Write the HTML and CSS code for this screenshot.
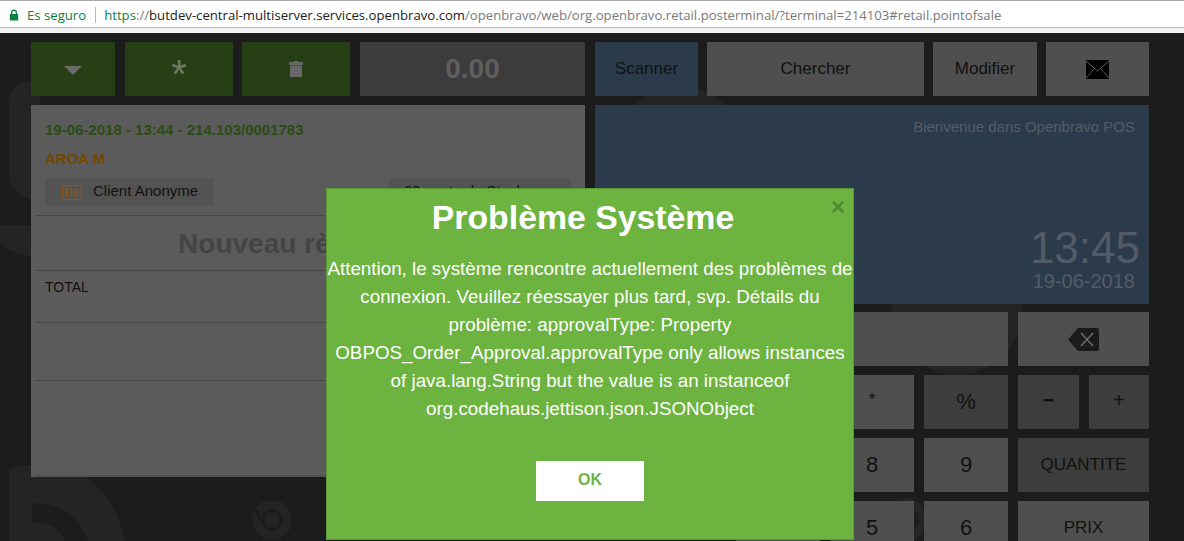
FILE: index.html
```html
<!DOCTYPE html>
<html lang="fr">
<head>
<meta charset="utf-8">
<title>Openbravo POS</title>
<link rel="stylesheet" href="styles.css">
</head>
<body>
<div class="urlbar">
  <svg class="lock" width="10" height="12" viewBox="0 0 10 12"><path d="M2 5V3.4a3 3 0 0 1 6 0V5h1.2v6.6H.8V5zM3.3 5h3.4V3.4a1.7 1.7 0 0 0-3.4 0z" fill="#0b8043"/></svg>
  <span class="secure">Es seguro</span>
  <span class="sep"></span>
  <span class="url"><span class="scheme">https</span>://<span class="host">butdev-central-multiserver.services.openbravo.com</span>/openbravo/web/org.openbravo.retail.posterminal/?terminal=214103#retail.pointofsale</span>
</div>
<div class="app">
  <svg class="bgart" width="1184" height="508" viewBox="0 0 1184 508">
    <g fill="#242424">
      <path d="M40 49H30Q9 49 9 70V140Q9 165 40 167Z"/>
      <path d="M0 192H40V225Q12 222 0 210Z"/>
      <path d="M9 436Q20 432 31 432H66Q115 455 125 508H9Z"/>
      <circle cx="272" cy="487" r="20"/>
      <circle cx="957" cy="277" r="65"/>
      <circle cx="680" cy="117" r="64"/>
    </g>
    <path d="M32 470Q75 470 88 508H65Q58 489 32 489Z" fill="#1c1c1c"/>
    <g fill="none" stroke="#1c1c1c">
      <circle cx="272" cy="487" r="9" stroke-width="3.5"/>
      <path d="M256 477L265 494" stroke-width="3.5"/>
    </g>
    <circle cx="905" cy="487" r="18" fill="none" stroke="#252525" stroke-width="8"/>
  </svg>
  <div class="columns">
    <div class="col">
      <div class="toolbar">
        <div class="btn green w84 mr1"><span class="tri"></span></div>
        <div class="btn green w108"><span class="star">*</span></div>
        <div class="btn green w108 mr1">
          <svg width="14" height="16" viewBox="0 0 14 16"><path d="M5 0h4v1H5zM0 1h14v3H0zM1 4.500h12V16H1z" fill="#686868"/></svg>
        </div>
        <div class="btn total grow">0.00</div>
      </div>
      <div class="ticket">
        <div class="ticket-head">
          <div class="docno">19-06-2018 - 13:44 - 214.103/0001783</div>
          <div class="user">AROA M</div>
          <div class="chips">
            <div class="chip client">
              <svg width="20" height="15" viewBox="0 0 20 15"><rect x=".7" y=".7" width="18.6" height="13.6" rx="1" fill="none" stroke="#8a5a1a" stroke-width="1.2"/><path d="M4 4h3M4 7.500h3M4 11h3M4 4v7M9.500 4v7M12.500 4v7M15.500 4v7" stroke="#8a5a1a" stroke-width="1.4" fill="none"/></svg>
              <span class="chip-label">Client Anonyme</span>
            </div>
            <div class="chip stock"><span class="chip-label">00 vente de Stock</span></div>
          </div>
        </div>
        <div class="row title">Nouveau règlement</div>
        <div class="row totalrow">TOTAL</div>
        <div class="row blank"></div>
        <div class="ticket-foot"></div>
      </div>
    </div>
    <div class="col">
      <div class="toolbar tight">
        <div class="btn blue w103">Scanner</div>
        <div class="btn grow">Chercher</div>
        <div class="btn w104">Modifier</div>
        <div class="btn w103">
          <svg width="23" height="19" viewBox="0 0 23 19"><rect width="23" height="19" rx="1" fill="#000"/><path d="M0 1l11.500 10L23 1M0 18l8.500-9.500M23 18l-8.500-9.500" fill="none" stroke="#5a5a5a" stroke-width="1"/></svg>
        </div>
      </div>
      <div class="welcome">
        <div class="hello">Bienvenue dans Openbravo POS</div>
        <div class="clock">13:45</div>
        <div class="date">19-06-2018</div>
      </div>
      <div class="keypad">
        <div class="btn field"></div>
        <div class="btn">
          <svg width="31" height="23" viewBox="0 0 31 23"><path d="M10 0h19a2 2 0 0 1 2 2v19a2 2 0 0 1-2 2H10L0 11.500z" fill="#1b1b1b"/><path d="M13 5l12 13M25 5L13 18" stroke="#6a6a6a" stroke-width="1.600"/></svg>
        </div>
        <div class="btn"></div>
        <div class="btn key-star">*</div>
        <div class="btn dark big">%</div>
        <div class="split"><div class="btn dark minus">−</div><div class="btn dark">+</div></div>
        <div class="btn"></div>
        <div class="btn big">8</div>
        <div class="btn big">9</div>
        <div class="btn dark">QUANTITE</div>
        <div class="btn"></div>
        <div class="btn big">5</div>
        <div class="btn big">6</div>
        <div class="btn">PRIX</div>
      </div>
    </div>
  </div>
  <div class="modal">
    <span class="close">×</span>
    <h1>Problème Système</h1>
    <p>Attention, le système rencontre actuellement des problèmes de connexion. Veuillez réessayer plus tard, svp. Détails du problème: approvalType: Property OBPOS_Order_Approval.approvalType only allows instances of java.lang.String but the value is an instanceof org.codehaus.jettison.json.JSONObject</p>
    <div class="ok">OK</div>
  </div>
</div>
</body>
</html>
```
FILE: styles.css
```css
* { box-sizing: border-box; }
html, body { margin: 0; height: 541px; overflow: hidden; background: #1c1c1c; }
body { font-family: "Liberation Sans", Arial, sans-serif; color: #111; }

.urlbar { height: 33px; background: #fff; border-top: 1px solid #a9a9a9; box-shadow: inset 0 -5px 0 #f1f1f1, inset 0 -6px 0 #bdbdbd; display: flex; align-items: flex-start; padding: 6px 0 0 9px; font-family: "Open Sans", sans-serif; font-size: 13.17px; line-height: 17px; white-space: nowrap; }
.lock { margin: 2px 8px 0 0; }
.secure { color: #0b8043; }
.sep { width: 1px; height: 16px; background: #b5b5b5; margin: 0 8px 0 9px; }
.url { color: #7a7a7a; }
.scheme { color: #0b8043; }
.host { color: #222; }

.app { position: relative; height: 508px; overflow: hidden; }
.bgart { position: absolute; left: 0; top: 0; }
.columns { position: relative; display: flex; gap: 10px; padding: 9px 35px 0 31px; }
.col { width: 554px; flex: none; display: flex; flex-direction: column; gap: 9px; }
.toolbar { display: flex; gap: 9px; height: 54px; }
.mr1 { margin-right: 1px; }

.btn { height: 54px; background: #4f4f4f; display: flex; align-items: center; justify-content: center; font-size: 17px; color: #111; }
.grow { flex: 1; }
.w84 { width: 84px; }
.w108 { width: 108px; }
.w103 { width: 103px; }
.w104 { width: 104px; }
.green { background: #263f15; }
.blue { background: #2c3b4c; }
.dark { background: #3d3d3d; }
.total { background: #3c3c3c; color: #5f5f5f; font-size: 28px; font-weight: 700; }
.tri { width: 0; height: 0; margin-top: 3px; border-left: 9px solid transparent; border-right: 9px solid transparent; border-top: 9px solid #6a6a6a; }
.star { color: #6d7a66; font-size: 40px; line-height: 40px; height: 30px; }

.ticket { height: 372px; background: #5b5b5b; padding: 0 4px; display: flex; flex-direction: column; }
.ticket-head { height: 111px; padding: 16px 10px 0; border-bottom: 1px solid #484848; }
.docno { color: #2b4c13; font-size: 15px; font-weight: 700; line-height: 18px; }
.user { color: #744700; font-size: 15px; font-weight: 700; line-height: 18px; margin-top: 11px; }
.chips { display: flex; justify-content: space-between; margin-top: 10px; }
.chip { height: 28px; background: #535353; font-size: 15px; display: flex; align-items: center; }
.chip-label { margin-top: -3px; }
.client { width: 168px; padding-left: 17px; gap: 11px; }
.stock { width: 182px; padding-left: 15px; }
.row { border-bottom: 1px solid #484848; }
.title { height: 55px; text-align: center; color: #444; font-size: 28px; font-weight: 700; line-height: 56px; }
.totalrow { height: 52px; padding: 7px 10px; font-size: 14px; line-height: 18px; }
.blank { height: 58px; }
.ticket-foot { margin-top: auto; height: 2px; background: #525252; }

.welcome { height: 199px; background: #2c3b4c; padding: 13px 14px 0; text-align: right; color: #535c66; }
.hello { font-size: 15px; line-height: 18px; }
.clock { font-size: 44px; line-height: 50px; margin-top: 87px; margin-right: -5px; }
.date { font-size: 20px; line-height: 24px; margin-top: -4px; }

.keypad { display: grid; grid-template-columns: 84px 84px 84px 131px; gap: 9px 10px; margin-left: 141px; margin-top: -1px; }
.field { grid-column: 1 / span 3; }
.split { display: flex; gap: 10px; }
.split .btn { flex: 1; font-size: 20px; padding-bottom: 3px; }
.split .minus { font-weight: 700; }
.key-star { padding-bottom: 4px; }
.big { font-size: 22px; }

.modal { position: absolute; left: 326px; top: 155px; width: 528px; height: 352px; background: #6cb33f; border: 1px solid #5a9a34; color: #fff; text-align: center; }
.modal h1 { margin: 10px 14px 0 0; font-size: 33.8px; line-height: 37px; font-weight: 700; }
.modal p { margin: 19px 0 0; font-size: 18.8px; line-height: 28px; }
.close { position: absolute; right: 8px; top: 5px; color: #4e8a37; font-size: 24px; font-weight: 700; line-height: 26px; }
.ok { width: 108px; height: 40px; margin: 38px auto 0; background: #fff; color: #6cb33f; font-size: 16px; font-weight: 700; line-height: 37px; }
```
